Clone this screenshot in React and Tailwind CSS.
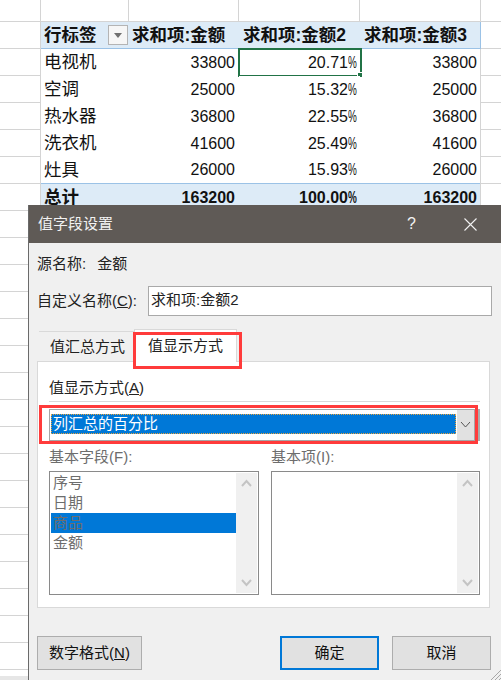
const rows = [
  ["电视机", "33800", "20.71", "33800"],
  ["空调", "25000", "15.32", "25000"],
  ["热水器", "36800", "22.55", "36800"],
  ["洗衣机", "41600", "25.49", "41600"],
  ["灶具", "26000", "15.93", "26000"],
];

function Percent({ value }) {
  return (
    <span>
      {value}
      <span className="inline-block w-[9px] origin-left scale-x-[0.62]">%</span>
    </span>
  );
}

function SheetRow({ children }) {
  return (
    <div className="flex h-[27px] shrink-0">
      <div className="w-[41px] border-r border-b border-[#d4d4d4]"></div>
      {children}
      <div className="w-[20px] border-b border-[#d4d4d4]"></div>
    </div>
  );
}

function TableCells({ cells, bold, bg, border, selected }) {
  const base = "flex items-center justify-end text-[16px] " + bg + " " + border;
  return (
    <div className={"flex w-[440px] border-r border-[#d4d4d4] " + (bold ? "font-bold" : "")}>
      <div className={"flex w-[88px] items-center pl-[3px] text-[17.5px] " + bg + " " + border}>{cells[0]}</div>
      <div className={"w-[110px] pr-[4px] " + base}>{cells[1]}</div>
      <div className={"relative w-[121px] pr-[3px] " + base}>
        <Percent value={cells[2]} />
        {selected && (
          <div className="absolute -top-[1px] -right-[2px] -bottom-[1px] -left-[1px] border-2 border-[#217346]">
            <div className="absolute -right-[3px] -bottom-[3px] h-[6px] w-[6px] border border-white bg-[#217346]"></div>
          </div>
        )}
      </div>
      <div className={"w-[120px] pr-[3px] " + base}>{cells[3]}</div>
    </div>
  );
}

function Sheet() {
  return (
    <div className="flex h-[676px] flex-col overflow-hidden text-[#111]">
      <div className="flex h-[22px] shrink-0">
        <div className="w-[41px] border-r border-b border-[#d4d4d4]"></div>
        <div className="w-[88px] border-r border-b border-[#d4d4d4]"></div>
        <div className="w-[110px] border-r border-b border-[#d4d4d4]"></div>
        <div className="w-[121px] border-r border-b border-[#d4d4d4]"></div>
        <div className="w-[121px] border-r border-b border-[#d4d4d4]"></div>
        <div className="w-[20px] border-b border-[#d4d4d4]"></div>
      </div>

      <SheetRow>
        <div className="flex w-[440px] border-r border-b border-[#9bc2e6] bg-[#ddebf7] text-[17.5px] font-bold">
          <div className="flex w-[88px] items-center justify-between pr-[1px] pl-[3px]">
            <span>行标签</span>
            <span className="flex h-[20px] w-[20px] items-center justify-center border border-[#b4b4b4] bg-[#f6f6f6]">
              <svg width="8" height="5" viewBox="0 0 8 5">
                <path d="M0 0H8L4 5Z" fill="#707070" />
              </svg>
            </span>
          </div>
          <div className="flex w-[110px] items-center pl-[3px] whitespace-nowrap">求和项:金额</div>
          <div className="flex w-[121px] items-center pl-[4px] whitespace-nowrap">求和项:金额2</div>
          <div className="flex w-[120px] items-center pl-[4px] whitespace-nowrap">求和项:金额3</div>
        </div>
      </SheetRow>

      {rows.map((r, i) => (
        <SheetRow key={r[0]}>
          <TableCells
            cells={r}
            bg="bg-white"
            border={i === rows.length - 1 ? "border-b border-[#9bc2e6]" : ""}
            selected={i === 0}
          />
        </SheetRow>
      ))}

      <SheetRow>
        <TableCells cells={["总计", "163200", "100.00", "163200"]} bold bg="bg-[#ddebf7]" border="" />
      </SheetRow>

      {Array.from({ length: 18 }).map((_, i) => (
        <SheetRow key={i}>
          <div className="w-[440px]"></div>
        </SheetRow>
      ))}
    </div>
  );
}

function Chevron({ up, color = "#c4c4c4", width = 2 }) {
  return (
    <svg width="11" height="8" viewBox="0 0 11 8" fill="none">
      <path d={up ? "M1 7L5.5 2L10 7" : "M1 1L5.5 6L10 1"} stroke={color} strokeWidth={width} />
    </svg>
  );
}

function ListBox({ width, items }) {
  return (
    <div className={"flex h-[124px] border border-[#8a8a8a] bg-white p-[1px] " + width}>
      <div className="flex-1 text-[15px] text-[#6d6d6d]">
        {items.map((t) => (
          <div key={t} className={"flex h-[20px] items-center pl-[2px] " + (t === "商品" ? "bg-[#0078d7]" : "")}>
            {t}
          </div>
        ))}
      </div>
      <div className="flex w-[21px] flex-col items-center justify-between bg-[#f0f0f0] py-[6px]">
        <Chevron up />
        <Chevron />
      </div>
    </div>
  );
}

function Button({ className = "", children }) {
  return (
    <div className={"flex h-[34px] items-center justify-center bg-[#e1e1e1] text-[15px] text-[#111] " + className}>
      {children}
    </div>
  );
}

function Dialog() {
  return (
    <div className="absolute top-[205px] left-[28px] h-[475px] w-[473px] border-l border-[#6a6a6a] bg-[#f0f0f0] text-[15px] text-[#222]">
      <div className="flex h-[38px] items-center justify-between bg-[#5f5a56] pr-[24px] pl-[9px] text-[#f2f2f2]">
        <span>值字段设置</span>
        <div className="flex items-center gap-[48px]">
          <span className="text-[16px]">?</span>
          <svg width="13" height="13" viewBox="0 0 13 13" fill="none">
            <path d="M0.5 0.5L12.5 12.5M12.5 0.5L0.5 12.5" stroke="#f2f2f2" strokeWidth="1.1" />
          </svg>
        </div>
      </div>

      <div className="flex flex-col pl-[8px]">
        <div className="mt-[11px] flex h-[20px] items-center gap-[11px]">
          <span>源名称:</span>
          <span>金额</span>
        </div>

        <div className="mt-[12px] flex items-center gap-[11px]">
          <span className="w-[100px] whitespace-nowrap">
            自定义名称(<u>C</u>):
          </span>
          <div className="flex h-[30px] w-[344px] items-start border border-[#a9a9a9] bg-white pt-[2px] pl-[2px]">
            求和项:金额2
          </div>
        </div>

        <div className="relative z-10 mt-[13px] flex h-[33px] items-end pl-[2px]">
          <div className="flex h-[31px] w-[95px] items-center justify-center border-t border-[#d9d9d9] pl-[2px]">
            值汇总方式
          </div>
          <div className="flex h-[33px] w-[103px] items-center justify-center border-x border-t border-[#d9d9d9] bg-white">
            值显示方式
          </div>
        </div>

        <div className="-mt-px h-[247px] w-[453px] border border-[#d9d9d9] bg-white pt-[16px] pr-[9px] pl-[11px]">
          <div className="flex h-[20px] items-center">
            值显示方式(<u>A</u>)
          </div>
          <div className="mt-[3px] h-px bg-[#d9d9d9]"></div>

          <div className="mt-[7px] flex h-[32px]">
            <div className="flex flex-1 border border-[#a6a6a6] bg-white pl-[1px]">
              <div className="mt-[4px] flex h-[20px] flex-1 items-center border border-dotted border-[#e8a33d] bg-[#0078d7] pl-[1px] text-white">
                列汇总的百分比
              </div>
              <div className="ml-[1px] flex w-[17px] items-center justify-center bg-[#e1e1e1]">
                <Chevron color="#555" width={1} />
              </div>
            </div>
            <div className="w-[5px] bg-[#ababab]"></div>
          </div>

          <div className="mt-[6px] flex gap-[12px] text-[#6d6d6d]">
            <div className="flex h-[20px] w-[210px] items-center">基本字段(F):</div>
            <div className="flex h-[20px] items-center">基本项(I):</div>
          </div>
          <div className="mt-[4px] flex gap-[12px]">
            <ListBox width="w-[210px]" items={["序号", "日期", "商品", "金额"]} />
            <ListBox width="w-[209px]" items={[]} />
          </div>
        </div>

        <div className="mt-[28px] flex">
          <Button className="w-[105px] border border-[#adadad]">
            <span>
              数字格式(<u>N</u>)
            </span>
          </Button>
          <Button className="ml-[138px] w-[99px] border-2 border-[#0078d7]">确定</Button>
          <Button className="ml-[13px] w-[99px] border border-[#adadad]">取消</Button>
        </div>
      </div>

      <svg className="absolute right-0 bottom-0" width="11" height="11" viewBox="0 0 11 11" fill="none">
        <path d="M11 1L1 11M11 5L5 11M11 9L9 11" stroke="#a8a8a8" strokeWidth="1" />
      </svg>

      <div className="pointer-events-none absolute top-[127px] left-[104px] z-20 h-[37px] w-[109px] border-[3px] border-[#ff3b3b]"></div>
      <div className="pointer-events-none absolute top-[200px] left-[10px] z-20 h-[39px] w-[439px] border-[3px] border-[#ff3b3b]"></div>
    </div>
  );
}

export default function App() {
  return (
    <div className="relative h-[680px] w-[501px] overflow-hidden bg-white font-['Liberation_Sans','Noto_Sans_CJK_SC',sans-serif]">
      <Sheet />
      <div className="h-[4px] bg-[#e6e6e6]"></div>
      <Dialog />
    </div>
  );
}
